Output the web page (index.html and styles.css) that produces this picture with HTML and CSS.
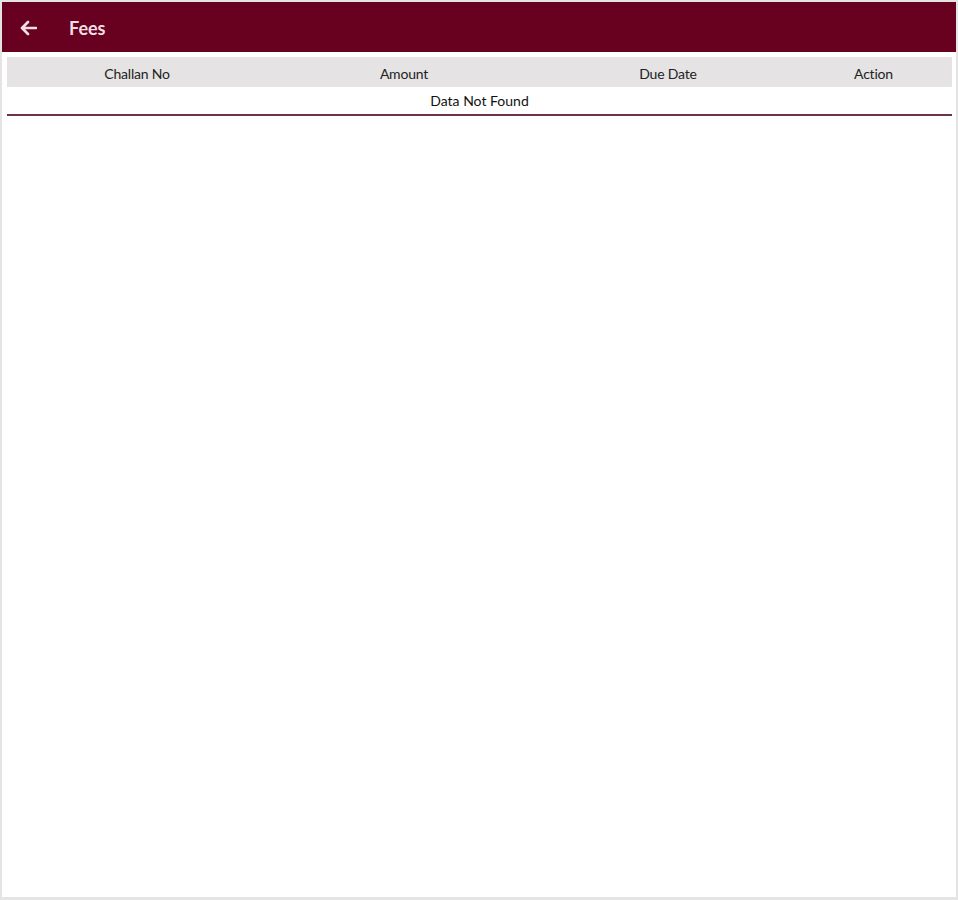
FILE: index.html
```html
<!DOCTYPE html>
<html lang="en">
<head>
    <meta charset="UTF-8">
    <meta name="viewport" content="width=device-width, initial-scale=1.0">
    <title>Fees</title>
    <link rel="stylesheet" href="styles.css">
</head>
<body>
    <div class="frame">
        <div class="toolbar">
            <span class="back">
                <svg width="18" height="16" viewBox="0 0 18 16">
                    <path d="M17 8H3M9 2L3 8l6 6" fill="none" stroke="#f3dfe3" stroke-width="2.6" stroke-linecap="round" stroke-linejoin="round"/>
                </svg>
            </span>
            <span class="title">Fees</span>
        </div>

        <table class="fees">
            <thead>
                <tr>
                    <th class="col-no">Challan No</th>
                    <th class="col-amount">Amount</th>
                    <th class="col-date">Due Date</th>
                    <th>Action</th>
                </tr>
            </thead>
            <tbody>
                <tr>
                    <td colspan="4">Data Not Found</td>
                </tr>
            </tbody>
        </table>
    </div>
</body>
</html>
```

FILE: styles.css
```css
body {
    margin: 0;
    font-family: Lato, "Open Sans", sans-serif;
    background: #fff;
}

.frame {
    box-sizing: border-box;
    height: 900px;
    border: 2px solid #e4e4e4;
    border-bottom-width: 3px;
}

.toolbar {
    display: flex;
    align-items: center;
    height: 50px;
    padding-top: 2px;
    box-sizing: border-box;
    background: #680020;
    color: #f3dfe3;
}

.back {
    display: flex;
    width: 18px;
    margin-left: 17px;
}

.title {
    margin-left: 32px;
    font-size: 18px;
    font-weight: bold;
}

.fees {
    width: 945px;
    margin: 5px 0 0 5px;
    border-collapse: collapse;
    font-size: 14px;
    color: #222;
}

.fees th {
    height: 30px;
    padding: 3px 0 0;
    box-sizing: border-box;
    background: #e5e3e3;
    font-weight: normal;
    text-align: center;
    letter-spacing: -0.2px;
}

.col-no {
    width: 260px;
}

.col-amount {
    width: 274px;
}

.col-date {
    width: 254px;
}

.fees td {
    height: 27px;
    padding: 0;
    text-align: center;
    color: #111;
    border-bottom: 2px solid #6e3444;
}
```
